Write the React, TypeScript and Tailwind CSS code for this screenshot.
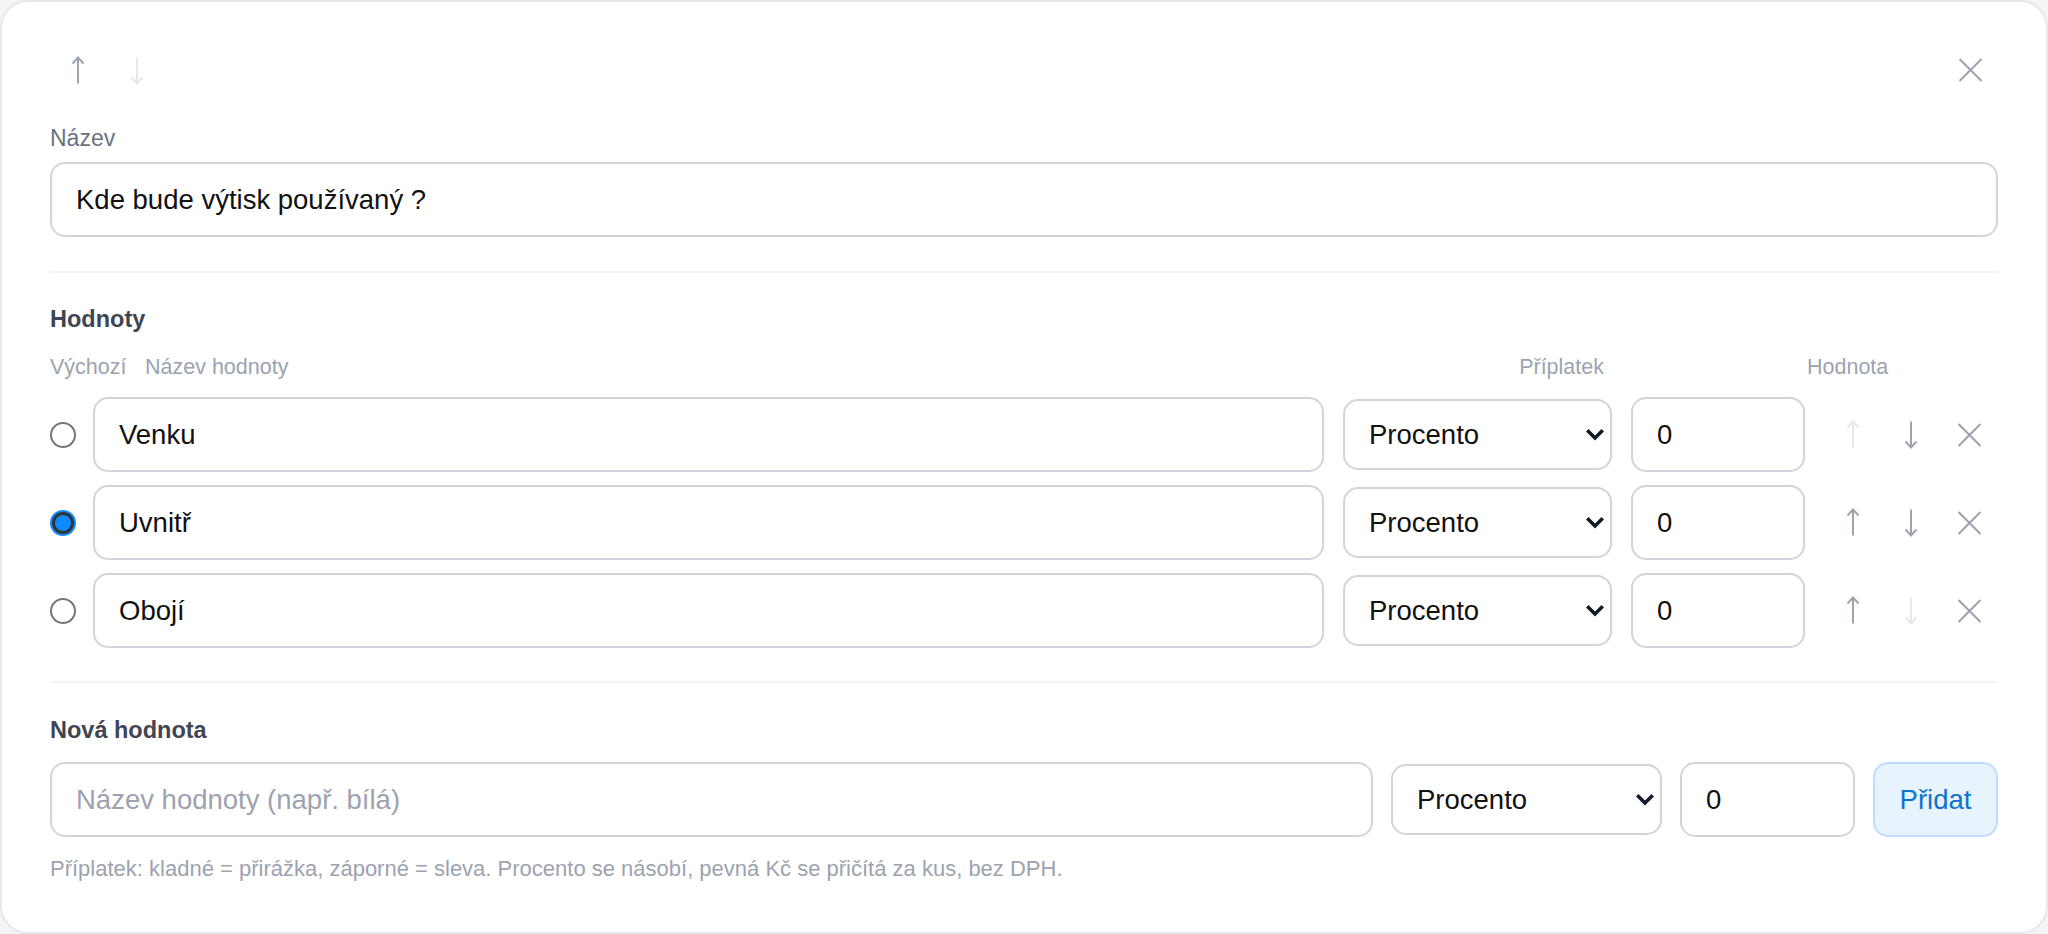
import React from "react";

const font = "font-['Liberation_Sans',Arial,sans-serif]";

function ArrowIcon({ dir, active }: { dir: "up" | "down"; active: boolean }) {
  return (
    <svg
      width="14"
      height="29"
      viewBox="0 0 14 29"
      fill="none"
      stroke="currentColor"
      strokeWidth="2"
      className={active ? "text-[#9ca3af]" : "text-[#e5e7eb]"}
    >
      <line x1="7" y1="1.5" x2="7" y2="27.5" />
      {dir === "up" ? (
        <polyline points="1.5,7.5 7,1.5 12.5,7.5" />
      ) : (
        <polyline points="1.5,21.5 7,27.5 12.5,21.5" />
      )}
    </svg>
  );
}

function XIcon() {
  return (
    <svg width="25" height="24" viewBox="0 0 25 24" fill="none" stroke="currentColor" strokeWidth="2" className="text-[#9ca3af]">
      <line x1="1.5" y1="1" x2="23.5" y2="23" />
      <line x1="23.5" y1="1" x2="1.5" y2="23" />
    </svg>
  );
}

function Chevron() {
  return (
    <svg width="18" height="12" viewBox="0 0 18 12" fill="none" stroke="#111827" strokeWidth="3.5" strokeLinecap="square">
      <polyline points="2.5,2.5 9,9 15.5,2.5" />
    </svg>
  );
}

function Radio({ checked }: { checked: boolean }) {
  if (checked) {
    return (
      <div className="flex h-[26px] w-[26px] items-center justify-center rounded-full bg-[#0d8bff]">
        <div className="h-[22px] w-[22px] rounded-full border-[3px] border-[#333333] bg-[#0d8bff]" />
      </div>
    );
  }
  return <div className="h-[26px] w-[26px] rounded-full border-2 border-[#767676] bg-white" />;
}

function SelectBox({ w }: { w: string }) {
  return (
    <div className={`relative flex h-[71px] shrink-0 items-center rounded-[15px] border-2 border-[#d1d5db] bg-white pl-[24px] ${w}`}>
      <span className="text-[27.5px] text-[#111111]">Procento</span>
      <div className="absolute right-[6px] top-1/2 -translate-y-1/2">
        <Chevron />
      </div>
    </div>
  );
}

const inputCls =
  "h-[75px] rounded-[15px] border-2 border-[#d1d5db] bg-white px-[24px] text-[27.5px] text-[#111111] outline-none font-['Liberation_Sans',Arial,sans-serif] placeholder:text-[#9ca3af]";

const rows = [
  { name: "Venku", checked: false, up: false, down: true },
  { name: "Uvnitř", checked: true, up: true, down: true },
  { name: "Obojí", checked: false, up: true, down: false },
];

export default function App() {
  return (
    <div className={`bg-[#f3f4f6] ${font}`}>
      <div className="flex h-[934px] w-full flex-col rounded-[28px] border-2 border-[#e5e7eb] bg-white px-[48px] pt-[46px]">
        {/* top bar */}
        <div className="flex h-[44px] items-center justify-between">
          <div className="flex">
            <button className="flex h-[44px] w-[56px] items-center justify-center">
              <ArrowIcon dir="up" active />
            </button>
            <button className="flex h-[44px] w-[62px] items-center justify-center">
              <ArrowIcon dir="down" active={false} />
            </button>
          </div>
          <button className="flex h-[44px] w-[56px] items-center justify-center">
            <XIcon />
          </button>
        </div>

        <div className="mt-[30px] text-[23px] leading-[32px] text-[#6b7280]">Název</div>
        <input className={`mt-[8px] w-full ${inputCls}`} defaultValue="Kde bude výtisk používaný ?" />

        <div className="mt-[34px] h-[2px] w-full bg-[#f3f4f6]" />

        <div className="mt-[30px] text-[23.5px] font-bold leading-[32px] text-[#3f4553]">Hodnoty</div>

        <div className="mt-[17px] flex text-[21.5px] leading-[30px] text-[#9ca3af]">
          <span className="w-[95px] shrink-0">Výchozí</span>
          <span className="flex-1">Název hodnoty</span>
          <span>Příplatek</span>
          <span className="w-[203px] shrink-0" />
          <span className="w-[191px] shrink-0">Hodnota</span>
        </div>

        <div className="mt-[15px] flex flex-col gap-[13px]">
          {rows.map((r) => (
            <div key={r.name} className="flex items-center">
              <div className="mr-[17px] flex w-[26px] shrink-0 justify-center">
                <Radio checked={r.checked} />
              </div>
              <input className={`min-w-0 flex-1 ${inputCls}`} defaultValue={r.name} />
              <div className="ml-[19px]">
                <SelectBox w="w-[269px]" />
              </div>
              <input className={`ml-[19px] w-[174px] shrink-0 ${inputCls}`} defaultValue="0" />
              <div className="ml-[19px] flex w-[174px] shrink-0">
                <button className="flex h-[44px] w-[58px] items-center justify-center">
                  <ArrowIcon dir="up" active={r.up} />
                </button>
                <button className="flex h-[44px] w-[58px] items-center justify-center">
                  <ArrowIcon dir="down" active={r.down} />
                </button>
                <button className="flex h-[44px] w-[58px] items-center justify-center">
                  <XIcon />
                </button>
              </div>
            </div>
          ))}
        </div>

        <div className="mt-[33px] h-[2px] w-full bg-[#f3f4f6]" />

        <div className="mt-[31px] text-[23.5px] font-bold leading-[32px] text-[#3f4553]">Nová hodnota</div>

        <div className="mt-[16px] flex items-center gap-[18px]">
          <input className={`min-w-0 flex-1 ${inputCls}`} placeholder="Název hodnoty (např. bílá)" />
          <SelectBox w="w-[271px]" />
          <input className={`w-[175px] shrink-0 ${inputCls}`} defaultValue="0" />
          <button className="h-[75px] w-[125px] shrink-0 rounded-[15px] border-2 border-[#bfdbfe] bg-[#e7f3ff] text-[27.5px] text-[#0b74d1]">
            Přidat
          </button>
        </div>

        <div className="mt-[17px] text-[22px] leading-[30px] text-[#9ca3af]">
          Příplatek: kladné = přirážka, záporné = sleva. Procento se násobí, pevná Kč se přičítá za kus, bez DPH.
        </div>
      </div>
    </div>
  );
}
